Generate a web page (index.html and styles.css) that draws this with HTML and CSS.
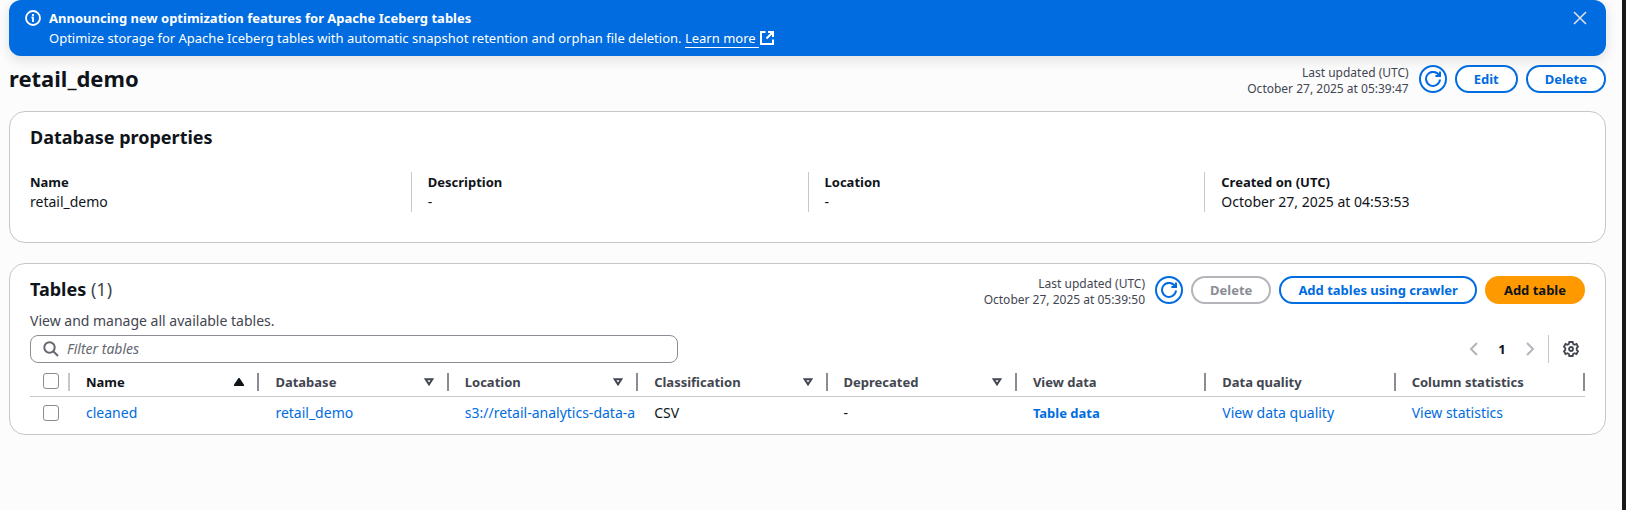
FILE: index.html
```html
<!DOCTYPE html>
<html lang="en">
<head>
<meta charset="utf-8">
<title>retail_demo</title>
<link rel="stylesheet" href="styles.css">
</head>
<body>
<svg class="sprite" aria-hidden="true">
  <symbol id="refresh" viewBox="0 0 16 16"><path d="M14.200 4.600A7 7 0 1 0 15 8.500M15 .5V5h-4.600"/></symbol>
  <symbol id="sort" viewBox="0 0 10 8"><path d="M1.6 1.2h6.8L5 6.4z"/></symbol>
</svg>
<main class="page">
  <section class="banner" aria-label="Announcement">
    <svg class="icon" viewBox="0 0 16 16"><circle cx="8" cy="8" r="7"/><path d="M8 4v2M6.500 7.500H8V12"/></svg>
    <div class="banner-text">
      <strong>Announcing new optimization features for Apache Iceberg tables</strong>
      <div>Optimize storage for Apache Iceberg tables with automatic snapshot retention and orphan file deletion.
        <a class="banner-link" href="#"><span>Learn more </span><svg class="external" viewBox="0 0 16 16"><path d="M6.500 2H2v12h12V9.500M9 2h5v5M14 2 7.500 8.500"/></svg></a></div>
    </div>
    <button class="icon-button close" aria-label="Dismiss"><svg class="icon" viewBox="0 0 16 16"><path d="m2 2 12 12M14 2 2 14"/></svg></button>
  </section>

  <header class="bar page-head">
    <h1>retail_demo</h1>
    <div class="actions">
      <p class="updated">Last updated (UTC)<br>October 27, 2025 at 05:39:47</p>
      <button class="button round" aria-label="Refresh"><svg class="icon"><use href="#refresh"/></svg></button>
      <button class="button">Edit</button>
      <button class="button">Delete</button>
    </div>
  </header>

  <section class="panel">
    <h2>Database properties</h2>
    <dl class="properties">
      <div><dt>Name</dt><dd>retail_demo</dd></div>
      <div><dt>Description</dt><dd>-</dd></div>
      <div><dt>Location</dt><dd>-</dd></div>
      <div><dt>Created on (UTC)</dt><dd>October 27, 2025 at 04:53:53</dd></div>
    </dl>
  </section>

  <section class="panel tables">
    <div class="bar">
      <h2>Tables <span class="count">(1)</span></h2>
      <div class="actions">
        <p class="updated">Last updated (UTC)<br>October 27, 2025 at 05:39:50</p>
        <button class="button round" aria-label="Refresh"><svg class="icon"><use href="#refresh"/></svg></button>
        <button class="button" disabled>Delete</button>
        <button class="button">Add tables using crawler</button>
        <button class="button primary">Add table</button>
      </div>
    </div>
    <p class="description">View and manage all available tables.</p>
    <div class="bar">
      <label class="filter">
        <svg class="icon" viewBox="0 0 16 16"><circle cx="6.500" cy="6.500" r="5.200"/><path d="m10.500 10.500 4.500 4.500"/></svg>
        <input type="text" placeholder="Filter tables" aria-label="Filter tables">
      </label>
      <nav class="pages" aria-label="Pagination">
        <button class="icon-button" aria-label="Previous page" disabled><svg class="icon" viewBox="0 0 16 16"><path d="M11 2 5 8l6 6"/></svg></button>
        <button class="icon-button current">1</button>
        <button class="icon-button" aria-label="Next page" disabled><svg class="icon" viewBox="0 0 16 16"><path d="m5 2 6 6-6 6"/></svg></button>
        <button class="icon-button settings" aria-label="Preferences"><svg class="icon" viewBox="0 0 16 16"><path d="M6.300 1h3.400l.4 2 1.400.8 2-.8L15 5.800 13.700 7.200v1.600L15 10.200 13.500 13l-2-.8-1.400.8-.4 2H6.300l-.4-2-1.400-.8-2 .8L1 10.200l1.300-1.400V7.200L1 5.800 2.500 3l2 .8L5.900 3z"/><circle cx="8" cy="8" r="2"/></svg></button>
      </nav>
    </div>
    <table>
      <thead>
        <tr>
          <th class="select"><input type="checkbox" aria-label="Select all"></th>
          <th class="sorted"><div>Name<svg class="sort" viewBox="0 0 10 8"><path d="M5 1 9 7H1z"/></svg></div></th>
          <th><div>Database<svg class="sort"><use href="#sort"/></svg></div></th>
          <th><div>Location<svg class="sort"><use href="#sort"/></svg></div></th>
          <th><div>Classification<svg class="sort"><use href="#sort"/></svg></div></th>
          <th><div>Deprecated<svg class="sort"><use href="#sort"/></svg></div></th>
          <th><div>View data</div></th>
          <th><div>Data quality</div></th>
          <th><div>Column statistics</div></th>
        </tr>
      </thead>
      <tbody>
        <tr>
          <td class="select"><input type="checkbox" aria-label="Select cleaned"></td>
          <td><a href="#">cleaned</a></td>
          <td><a href="#">retail_demo</a></td>
          <td><a href="#">s3://retail-analytics-data-a</a></td>
          <td>CSV</td>
          <td>-</td>
          <td><a class="strong" href="#">Table data</a></td>
          <td><a href="#">View data quality</a></td>
          <td><a href="#">View statistics</a></td>
        </tr>
      </tbody>
    </table>
  </section>
</main>
</body>
</html>
```
FILE: styles.css
```css
* { box-sizing: border-box; }
body, h1, h2, p, dl, dd { margin: 0; }
body {
  min-height: 100vh;
  border-right: 4px solid #161819;
  background: #fcfcfd;
  color: #0f141a;
  font: 13px/20px "Noto Sans", sans-serif;
}
button, input { font: inherit; }
a { color: #006ce0; text-decoration: none; }
svg { fill: none; stroke: currentColor; stroke-width: 2; }
.sprite { position: absolute; width: 0; height: 0; }
.icon { display: block; flex: none; width: 16px; height: 16px; }
.page { padding: 0 16px 0 9px; }

.banner {
  display: flex;
  gap: 8px;
  padding: 8px 16px;
  border-radius: 12px;
  background: #006ce0;
  color: #fff;
  box-shadow: 0 4px 12px 1px #0000001a;
}
.banner > .icon { margin-top: 2px; stroke-width: 1.8; }
.banner-text { flex: 1; }
.banner-link { color: #fff; }
.banner-link span { border-bottom: 1px solid #fff; white-space: pre; }
.external { width: 16px; height: 16px; vertical-align: -3px; }
.icon-button { display: flex; justify-content: center; width: 28px; padding: 0; border: 0; background: none; color: #424650; }
.icon-button:disabled { color: #b4b4bb; }
.close { width: 20px; height: 20px; align-items: center; color: #dedee3; }
.close svg { stroke-width: 1.6; }

.bar { display: flex; align-items: center; justify-content: space-between; }
.page-head { padding: 5px 0 14px; }
h1 { padding-bottom: 2px; font-size: 22px; line-height: 30px; }
h2 { font-size: 18px; line-height: 24px; }
.bar h2 { padding-bottom: 2px; }
.count { color: #424650; font-weight: 400; }
.actions { display: flex; align-items: center; gap: 8px; }
.updated { padding: 4px 2px 0 0; color: #424650; font-size: 12px; line-height: 16px; text-align: right; }
.button {
  display: flex;
  align-items: center;
  height: 28px;
  padding: 0 17px;
  border: 2px solid #006ce0;
  border-radius: 14px;
  background: #fff;
  color: #006ce0;
  font-weight: 700;
}
.button:disabled { border-color: #b4b4bb; color: #8c8c94; }
.round { width: 28px; padding: 0 4px; }
.primary { border-color: #ff9900; background: #ff9900; color: #0f141a; }

.panel { padding: 13px 20px 30px; border: 1px solid #c6c6cd; border-radius: 16px; background: #fff; }
.properties { display: grid; grid-template-columns: repeat(4, 1fr); gap: 32px; margin-top: 23px; }
.properties div + div { margin-left: -16px; padding-left: 16px; border-left: 1px solid #c6c6cd; }
dt { font-weight: 700; }
dd { font-size: 14px; }

.tables { margin-top: 20px; padding: 8px 20px 11px; }
.description { margin: 3px 0 4px; color: #424650; font-size: 14px; }
.filter {
  display: flex;
  align-items: center;
  gap: 8px;
  flex: 0 1 648px;
  height: 28px;
  padding: 0 12px;
  border: 1px solid #8c8c94;
  border-radius: 8px;
  color: #656871;
  font-size: 14px;
}
.filter input { flex: 1; min-width: 0; padding: 0; border: 0; outline: 0; background: none; }
.filter input::placeholder { color: #656871; font-style: italic; }
.pages { display: flex; align-items: center; }
.current { color: #0f141a; font-weight: 700; }
.settings { width: 37px; height: 28px; align-items: center; margin-left: 4px; padding-left: 8px; border-left: 1px solid #c6c6cd; }
.settings svg { stroke-width: 1.8; }

table { width: 100%; table-layout: fixed; border-collapse: separate; border-spacing: 0; }
th { height: 34px; padding: 10px 0 5px; border-bottom: 1px solid #c6c6cd; color: #424650; text-align: left; vertical-align: top; }
th div { display: flex; align-items: center; justify-content: space-between; height: 18px; padding: 0 13px 0 16px; border-right: 2px solid #8c8c94; }
td { height: 26px; padding: 6px 0 0 16px; overflow: hidden; font-size: 14px; white-space: nowrap; }
.sorted { color: #0f141a; }
.sort { width: 10px; height: 8px; }
.sorted .sort { fill: currentColor; }
.strong { font-size: 13px; font-weight: 700; }
.select { width: 40px; padding-left: 13px; }
.select input { display: block; appearance: none; width: 16px; height: 16px; margin: 0; border: 1px solid #8c8c94; border-radius: 3px; background: #fff; }
th.select { background: linear-gradient(#c6c6cd, #c6c6cd) right 10px / 2px 18px no-repeat; }
```
